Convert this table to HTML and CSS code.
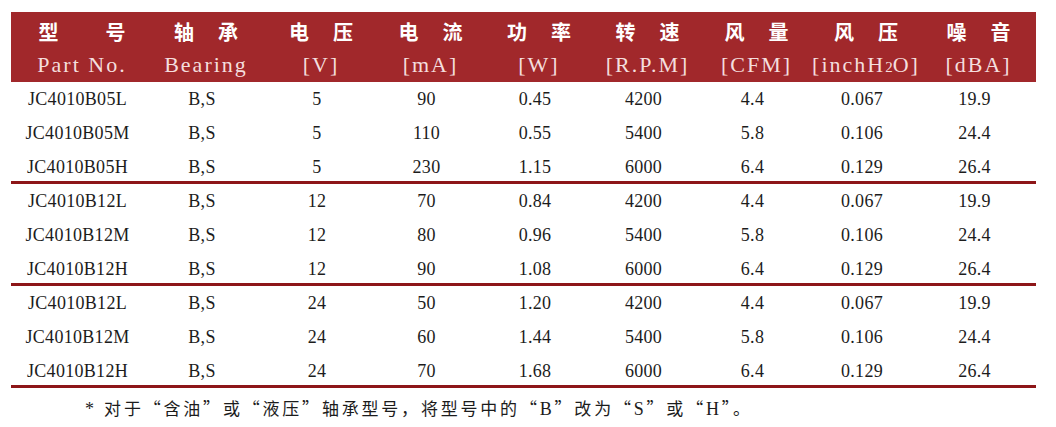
FILE: index.html
```html
<!DOCTYPE html>
<html lang="zh">
<head>
<meta charset="utf-8">
<title>JC4010 规格表</title>
<link rel="stylesheet" href="styles.css">
</head>
<body>
<div class="sheet">
  <table class="spec">
    <colgroup>
      <col class="c1"><col class="c2"><col class="c3"><col class="c4"><col class="c5"><col class="c6"><col class="c7"><col class="c8"><col class="c9">
    </colgroup>
    <thead>
      <tr class="zh-row">
        <th class="first"><span class="zh wide">型号</span></th>
        <th><span class="zh">轴承</span></th>
        <th><span class="zh">电压</span></th>
        <th><span class="zh">电流</span></th>
        <th><span class="zh">功率</span></th>
        <th><span class="zh">转速</span></th>
        <th><span class="zh">风量</span></th>
        <th><span class="zh">风压</span></th>
        <th><span class="zh">噪音</span></th>
      </tr>
      <tr class="en-row">
        <th class="first">Part No.</th><th>Bearing</th><th>[V]</th><th>[mA]</th><th>[W]</th><th>[R.P.M]</th><th>[CFM]</th><th>[inchH<span class="sub">2</span>O]</th><th>[dBA]</th>
      </tr>
    </thead>
    <tbody>
      <tr><td>JC4010B05L</td><td>B,S</td><td>5</td><td>90</td><td>0.45</td><td>4200</td><td>4.4</td><td>0.067</td><td>19.9</td></tr>
      <tr><td>JC4010B05M</td><td>B,S</td><td>5</td><td>110</td><td>0.55</td><td>5400</td><td>5.8</td><td>0.106</td><td>24.4</td></tr>
      <tr class="end"><td>JC4010B05H</td><td>B,S</td><td>5</td><td>230</td><td>1.15</td><td>6000</td><td>6.4</td><td>0.129</td><td>26.4</td></tr>
      <tr><td>JC4010B12L</td><td>B,S</td><td>12</td><td>70</td><td>0.84</td><td>4200</td><td>4.4</td><td>0.067</td><td>19.9</td></tr>
      <tr><td>JC4010B12M</td><td>B,S</td><td>12</td><td>80</td><td>0.96</td><td>5400</td><td>5.8</td><td>0.106</td><td>24.4</td></tr>
      <tr class="end"><td>JC4010B12H</td><td>B,S</td><td>12</td><td>90</td><td>1.08</td><td>6000</td><td>6.4</td><td>0.129</td><td>26.4</td></tr>
      <tr><td>JC4010B12L</td><td>B,S</td><td>24</td><td>50</td><td>1.20</td><td>4200</td><td>4.4</td><td>0.067</td><td>19.9</td></tr>
      <tr><td>JC4010B12M</td><td>B,S</td><td>24</td><td>60</td><td>1.44</td><td>5400</td><td>5.8</td><td>0.106</td><td>24.4</td></tr>
      <tr class="end"><td>JC4010B12H</td><td>B,S</td><td>24</td><td>70</td><td>1.68</td><td>6000</td><td>6.4</td><td>0.129</td><td>26.4</td></tr>
    </tbody>
  </table>
  <p class="note"><span class="lat">* </span>对于“含油”或“液压”轴承型号，将型号中的“<span class="lat">B</span>”改为“<span class="lat">S</span>”或“<span class="lat">H</span>”。</p>
</div>
</body>
</html>
```

FILE: styles.css
```css
html, body {
  margin: 0;
  padding: 0;
  background: #ffffff;
}

.sheet {
  padding: 12px 0 0 11px;
  width: 1025px;
}

.spec {
  width: 1025px;
  border-collapse: separate;
  border-spacing: 0;
  table-layout: fixed;
  font-family: "Liberation Serif", "Noto Sans CJK SC", serif;
  color: #1c1c1c;
}

.c1 { width: 135px; }
.c2 { width: 120px; }
.c3 { width: 110px; }
.c4 { width: 109px; }
.c5 { width: 108px; }
.c6 { width: 109px; }
.c7 { width: 109px; }
.c8 { width: 110px; }
.c9 { width: 115px; }

.spec thead {
  background: #a1282b;
}

.spec th {
  padding: 0;
  text-align: center;
  white-space: nowrap;
  overflow: visible;
}

.spec th.first {
  padding-left: 7px;
}

.zh-row th {
  height: 40px;
  font-family: "Noto Sans CJK SC", sans-serif;
  font-weight: 700;
  font-size: 20px;
  line-height: 40px;
  color: #ffffff;
  vertical-align: middle;
}

.zh {
  letter-spacing: 24px;
  margin-right: -24px;
}

.zh.wide {
  letter-spacing: 47px;
  margin-right: -47px;
}

.en-row th {
  height: 30px;
  font-family: "Liberation Serif", serif;
  font-weight: 400;
  font-size: 22px;
  line-height: 26px;
  letter-spacing: 2px;
  color: #f4dede;
  vertical-align: top;
}

.sub {
  font-size: 15px;
  letter-spacing: 0;
}

.spec td {
  padding: 0 8px 0 0;
  text-align: center;
  font-size: 18px;
  line-height: 34px;
  letter-spacing: 0.3px;
  vertical-align: middle;
  white-space: nowrap;
}

.spec td:first-child {
  padding-right: 2px;
}

.spec tr.end td {
  padding-top: 4px;
  line-height: 27px;
  border-bottom: 3px solid #8d1618;
}

.note {
  margin: 10px 0 0 74px;
  font-family: "Noto Sans CJK SC", sans-serif;
  font-feature-settings: "fwid" 1;
  font-size: 17px;
  line-height: 20px;
  color: #1c1c1c;
  letter-spacing: 2.8px;
  white-space: nowrap;
}

.lat {
  font-family: "Liberation Serif", serif;
  font-feature-settings: normal;
  font-size: 18px;
}
```
